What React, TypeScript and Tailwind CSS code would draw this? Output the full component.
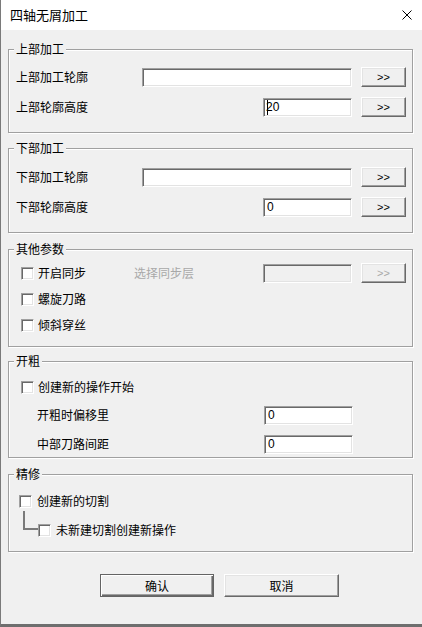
import React from "react";

const sunken =
  "border border-t-[#a0a0a0] border-l-[#a0a0a0] border-r-white border-b-white shadow-[inset_1px_1px_0_#696969,inset_-1px_-1px_0_#e3e3e3]";
const raised =
  "border border-t-white border-l-white border-r-[#696969] border-b-[#696969] shadow-[inset_-1px_-1px_0_#a0a0a0,inset_1px_1px_0_#e3e3e3] bg-[#f0f0f0]";

function Check() {
  return <div className={`w-[13px] h-[13px] shrink-0 bg-white ${sunken}`} />;
}

function Field({ w, value, caret, disabled }: { w: number; value?: string; caret?: boolean; disabled?: boolean }) {
  return (
    <div
      className={`h-[19px] flex items-center pl-[3px] font-['Liberation_Sans',sans-serif] text-[12px] leading-[14px] text-black ${sunken} ${
        disabled ? "bg-[#f0f0f0]" : "bg-white"
      }`}
      style={{ width: w }}
    >
      {caret && <span className="w-[1px] h-[15px] bg-black -mr-[2px]" />}
      {value}
    </div>
  );
}

function MoreBtn({ disabled }: { disabled?: boolean }) {
  return (
    <div
      className={`w-[45px] h-[20px] flex items-center justify-center text-[11px] leading-[12px] font-['Liberation_Sans',sans-serif] ${raised} ${
        disabled ? "text-[#a8a8a8]" : "text-black"
      }`}
    >
      &gt;&gt;
    </div>
  );
}

function Group({ title, className, children }: { title: string; className: string; children: React.ReactNode }) {
  return (
    <div
      className={`relative ml-[7px] w-[405px] border border-[#a0a0a0] shadow-[inset_1px_1px_0_#fff,1px_1px_0_#fff] flex flex-col ${className}`}
    >
      <span className="absolute left-[5px] -top-[9px] px-[2px] bg-[#f0f0f0] text-[12px] leading-[16px]">{title}</span>
      {children}
    </div>
  );
}

export default function App() {
  return (
    <div className="w-[422px] h-[627px] flex flex-col bg-[#f0f0f0] border-l border-l-[#7a7a7a] border-b-[3px] border-b-[#6e6e6e] font-['Noto_Sans_CJK_SC','Noto_Sans',sans-serif] text-black overflow-hidden">
      {/* Title bar */}
      <div className="h-[30px] shrink-0 bg-white flex items-center justify-between pl-[9px] pr-[10px]">
        <span className="text-[13px] leading-[16px]">四轴无屑加工</span>
        <svg width="10" height="10" viewBox="0 0 10 10" className="shrink-0">
          <path d="M0.5 0.5 L9.5 9.5 M9.5 0.5 L0.5 9.5" stroke="#000" strokeWidth="1" />
        </svg>
      </div>

      <div className="flex flex-col text-[12px] leading-[16px] pt-[19px]">
        {/* 上部加工 */}
        <Group title="上部加工" className="pt-[17px] pb-[15px] gap-[10px]">
          <div className="h-[20px] flex items-center pl-[7px] pr-[6px]">
            <span>上部加工轮廓</span>
            <div className="ml-auto flex items-center gap-[9px]">
              <Field w={210} />
              <MoreBtn />
            </div>
          </div>
          <div className="h-[20px] flex items-center pl-[7px] pr-[6px]">
            <span>上部轮廓高度</span>
            <div className="ml-auto flex items-center gap-[9px]">
              <Field w={89} value="20" caret />
              <MoreBtn />
            </div>
          </div>
        </Group>

        {/* 下部加工 */}
        <Group title="下部加工" className="mt-[15px] pt-[18px] pb-[15px] gap-[10px]">
          <div className="h-[20px] flex items-center pl-[7px] pr-[6px]">
            <span>下部加工轮廓</span>
            <div className="ml-auto flex items-center gap-[9px]">
              <Field w={210} />
              <MoreBtn />
            </div>
          </div>
          <div className="h-[20px] flex items-center pl-[7px] pr-[6px]">
            <span>下部轮廓高度</span>
            <div className="ml-auto flex items-center gap-[9px]">
              <Field w={89} value="0" />
              <MoreBtn />
            </div>
          </div>
        </Group>

        {/* 其他参数 */}
        <Group title="其他参数" className="mt-[16px] pt-[13px] pb-[11px] gap-[6px]">
          <div className="h-[20px] flex items-center pl-[12px] pr-[6px]">
            <Check />
            <span className="ml-[4px]">开启同步</span>
            <span className="ml-[48px] text-[#a8a8a8]">选择同步层</span>
            <div className="ml-auto flex items-center gap-[9px]">
              <Field w={89} disabled />
              <MoreBtn disabled />
            </div>
          </div>
          <div className="h-[20px] flex items-center pl-[12px]">
            <Check />
            <span className="ml-[4px]">螺旋刀路</span>
          </div>
          <div className="h-[20px] flex items-center pl-[12px]">
            <Check />
            <span className="ml-[4px]">倾斜穿丝</span>
          </div>
        </Group>

        {/* 开粗 */}
        <Group title="开粗" className="mt-[14px] pt-[15px] pb-[3px]">
          <div className="h-[20px] flex items-center pl-[12px]">
            <Check />
            <span className="ml-[4px]">创建新的操作开始</span>
          </div>
          <div className="mt-[8px] h-[20px] flex items-center pl-[28px] pr-[59px]">
            <span>开粗时偏移里</span>
            <div className="ml-auto">
              <Field w={89} value="0" />
            </div>
          </div>
          <div className="mt-[9px] h-[20px] flex items-center pl-[28px] pr-[59px]">
            <span>中部刀路间距</span>
            <div className="ml-auto">
              <Field w={89} value="0" />
            </div>
          </div>
        </Group>

        {/* 精修 */}
        <Group title="精修" className="mt-[16px] pt-[16px] pb-[11px] gap-[9px]">
          <div className="h-[20px] flex items-center pl-[10px]">
            <Check />
            <span className="ml-[5px]">创建新的切割</span>
          </div>
          <div className="h-[20px] flex items-center pl-[14px]">
            <div className="self-start -mt-[9px] w-[15px] h-[19px] border-l-2 border-b-2 border-[#7a7a7a]" />
            <Check />
            <span className="ml-[5px]">未新建切割创建新操作</span>
          </div>
        </Group>

        {/* Buttons */}
        <div className="mt-[22px] ml-[99px] flex gap-[10px]">
          <div className="w-[114px] h-[23px] flex items-center justify-center bg-[#f0f0f0] border border-[#646464] shadow-[inset_1px_1px_0_#fff,inset_-1px_-1px_0_#696969,inset_-2px_-2px_0_#a0a0a0]">
            确认
          </div>
          <div className={`w-[115px] h-[23px] flex items-center justify-center ${raised}`}>取消</div>
        </div>
      </div>
    </div>
  );
}
